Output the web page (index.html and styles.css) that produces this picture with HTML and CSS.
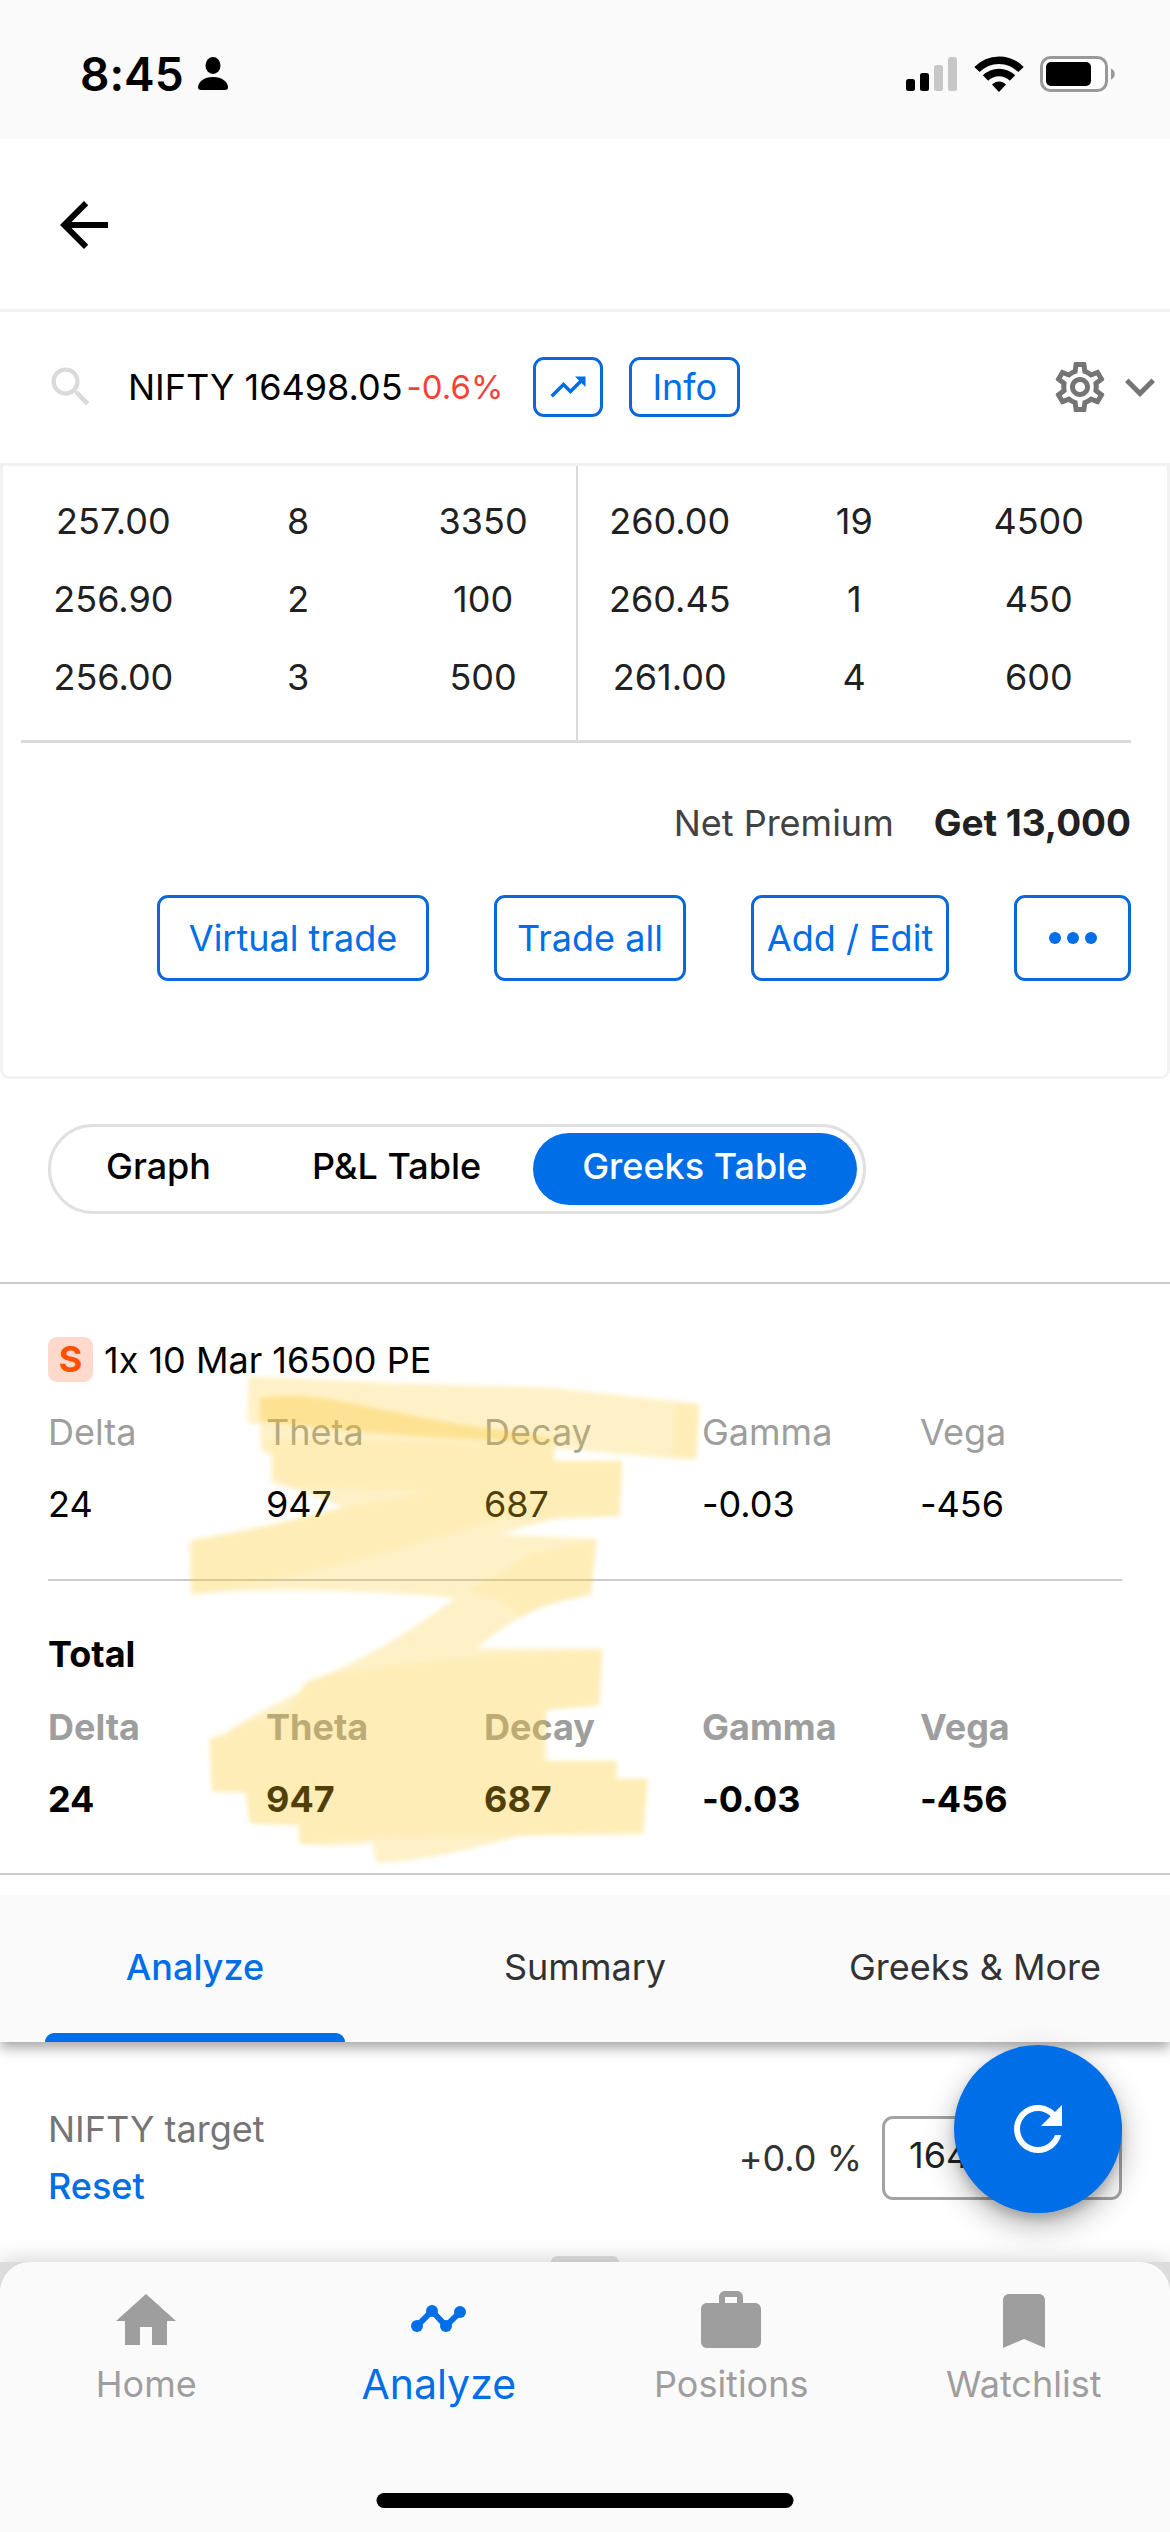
FILE: index.html
```html
<!DOCTYPE html>
<html lang="en">
<head>
    <meta charset="UTF-8">
    <meta name="viewport" content="width=device-width, initial-scale=1.0">
    <title>Analyze - NIFTY</title>
    <link rel="stylesheet" href="styles.css">
</head>

<body>
    <div class="status-bar">
        <div class="status-left">
            <span class="time">8:45</span>
            <svg width="30" height="34" viewBox="0 0 30 34"><ellipse cx="15" cy="8.500" rx="7.500" ry="8.500"/><path d="M3 33C1 33 0 32 0 30.500C0 25 6 20 15 20s15 5 15 10.500c0 1.500-1 2.500-3 2.500z"/></svg>
        </div>
        <div class="status-right">
            <svg width="52" height="36" viewBox="0 0 52 36">
                <rect x="0" y="23" width="9" height="12" rx="2.500"/>
                <rect x="14" y="17" width="9" height="18" rx="2.500"/>
                <g fill="#c7c7c7"><rect x="28" y="9" width="9" height="26" rx="2.500"/><rect x="42" y="1" width="9" height="34" rx="2.500"/></g>
            </svg>
            <svg width="50" height="36" viewBox="0 0 50 36">
                <g fill="none" stroke="#000" stroke-width="7.500"><path d="M3 13.500C15 1 35 1 47 13.500"/><path d="M11.500 22C19 14.500 31 14.500 38.500 22"/></g>
                <path d="M18 28.500c4-4 10-4 14 0L25 36z"/>
            </svg>
            <svg width="76" height="36" viewBox="0 0 76 36">
                <rect x="1.500" y="1.500" width="65" height="33" rx="9" fill="#fff" stroke="#999" stroke-width="3"/>
                <rect x="6" y="6" width="45" height="24" rx="5"/>
                <path d="M71 12.500c5 2 5 9 0 11z" fill="#999"/>
            </svg>
        </div>
    </div>

    <header class="app-header">
        <button class="icon-btn" aria-label="Back">
            <svg width="72" height="72" viewBox="0 0 24 24"><path d="M20 11H7.830l5.590-5.590L12 4l-8 8 8 8 1.410-1.410L7.830 13H20v-2z"/></svg>
        </button>
    </header>

    <div class="search-row">
        <svg class="search-icon" width="52" height="52" viewBox="0 0 24 24"><path d="M15.500 14h-.79l-.28-.27C15.410 12.590 16 11.110 16 9.500 16 5.910 13.090 3 9.500 3S3 5.910 3 9.500 5.910 16 9.500 16c1.610 0 3.090-.59 4.230-1.570l.27.28v.79l5 4.990L20.490 19l-4.990-5zm-6 0C7.010 14 5 11.990 5 9.500S7.010 5 9.500 5 14 7.010 14 9.500 11.990 14 9.500 14z"/></svg>
        <span class="symbol">NIFTY 16498.05</span><span class="change">-0.6%</span>
        <button class="outline-btn chart-btn" aria-label="Chart">
            <svg width="42" height="42" viewBox="0 0 24 24"><path d="M16 6l2.290 2.290-4.880 4.880-4-4L2 16.590 3.410 18l6-6 4 4 6.300-6.290L22 12V6z"/></svg>
        </button>
        <button class="outline-btn info-btn">Info</button>
        <div class="row-actions">
            <button class="icon-btn" aria-label="Settings">
                <svg width="60" height="60" viewBox="0 0 24 24"><path d="M19.430 12.980c.04-.32.07-.64.07-.98 0-.34-.03-.66-.07-.98l2.110-1.650c.19-.15.24-.42.12-.64l-2-3.460c-.09-.16-.26-.25-.44-.25-.06 0-.12.010-.17.030l-2.490 1c-.52-.4-1.080-.73-1.690-.98l-.38-2.650C14.460 2.180 14.250 2 14 2h-4c-.25 0-.46.18-.49.42l-.38 2.650c-.61.25-1.170.59-1.690.98l-2.490-1c-.06-.02-.12-.03-.18-.03-.17 0-.34.09-.43.25l-2 3.460c-.13.22-.07.49.12.64l2.110 1.650c-.04.32-.07.65-.07.98 0 .33.03.66.07.98l-2.110 1.650c-.19.15-.24.42-.12.64l2 3.460c.09.16.26.25.44.25.06 0 .12-.01.17-.03l2.490-1c.52.4 1.080.73 1.690.98l.38 2.650c.03.24.24.42.49.42h4c.25 0 .46-.18.49-.42l.38-2.650c.61-.25 1.170-.59 1.690-.98l2.490 1c.06.02.12.03.18.03.17 0 .34-.09.43-.25l2-3.460c.12-.22.07-.49-.12-.64l-2.110-1.650zm-1.980-1.710c.04.31.05.52.05.73 0 .21-.02.43-.05.73l-.14 1.130.89.7 1.080.84-.7 1.210-1.270-.51-1.040-.42-.9.68c-.43.32-.84.56-1.250.73l-1.060.43-.16 1.130-.2 1.350h-1.400l-.19-1.350-.16-1.130-1.060-.43c-.43-.18-.83-.41-1.230-.71l-.91-.7-1.060.43-1.270.51-.7-1.210 1.080-.84.89-.7-.14-1.130c-.03-.31-.05-.54-.05-.74s.02-.43.05-.73l.14-1.130-.89-.7-1.080-.84.7-1.210 1.270.51 1.040.42.9-.68c.43-.32.84-.56 1.250-.73l1.060-.43.16-1.130.2-1.350h1.390l.19 1.350.16 1.130 1.060.43c.43.18.83.41 1.230.71l.91.7 1.060-.43 1.270-.51.7 1.210-1.070.85-.89.7.14 1.130zM12 8c-2.210 0-4 1.790-4 4s1.790 4 4 4 4-1.790 4-4-1.790-4-4-4zm0 6c-1.100 0-2-.9-2-2s.9-2 2-2 2 .9 2 2-.9 2-2 2z"/></svg>
            </button>
            <button class="icon-btn" aria-label="Expand">
                <svg width="60" height="60" viewBox="0 0 24 24"><path d="M16.590 8.590L12 13.170 7.410 8.590 6 10l6 6 6-6z"/></svg>
            </button>
        </div>
    </div>

    <main class="content">
        <section class="card">
            <div class="book">
                <table class="book-side">
                    <tr><td>257.00</td><td>8</td><td>3350</td></tr>
                    <tr><td>256.90</td><td>2</td><td>100</td></tr>
                    <tr><td>256.00</td><td>3</td><td>500</td></tr>
                </table>
                <table class="book-side asks">
                    <tr><td>260.00</td><td>19</td><td>4500</td></tr>
                    <tr><td>260.45</td><td>1</td><td>450</td></tr>
                    <tr><td>261.00</td><td>4</td><td>600</td></tr>
                </table>
            </div>
            <div class="premium">
                <span>Net Premium</span>
                <strong>Get 13,000</strong>
            </div>
            <div class="actions">
                <button class="outline-btn action-wide">Virtual trade</button>
                <button class="outline-btn action">Trade all</button>
                <button class="outline-btn action-tight">Add / Edit</button>
                <button class="outline-btn action-more" aria-label="More">
                    <svg width="50" height="14" viewBox="0 0 50 14"><circle cx="7" cy="7" r="6"/><circle cx="25" cy="7" r="6"/><circle cx="43" cy="7" r="6"/></svg>
                </button>
            </div>
        </section>

        <div class="view-switch">
            <button>Graph</button>
            <button>P&amp;L Table</button>
            <button class="active">Greeks Table</button>
        </div>

        <section class="greeks">
            <div class="leg">
                <span class="side">S</span>
                <span>1x 10 Mar 16500 PE</span>
            </div>
            <table class="greeks-table">
                <tr><th>Delta</th><th>Theta</th><th>Decay</th><th>Gamma</th><th>Vega</th></tr>
                <tr><td>24</td><td>947</td><td>687</td><td>-0.03</td><td>-456</td></tr>
            </table>
            <hr>
            <h3>Total</h3>
            <table class="greeks-table total">
                <tr><th>Delta</th><th>Theta</th><th>Decay</th><th>Gamma</th><th>Vega</th></tr>
                <tr><td>24</td><td>947</td><td>687</td><td>-0.03</td><td>-456</td></tr>
            </table>

            <!-- highlighter marks over theta and decay -->
            <svg class="marker" width="720" height="500" viewBox="0 1375 720 500">
                <defs><filter id="soft"><feGaussianBlur stdDeviation="2"/></filter></defs>
                <g fill="#fcc523" stroke="#fcc523" stroke-width="5" stroke-linejoin="round" filter="url(#soft)">
                    <g opacity=".25">
                        <path d="M251 1380L400 1387L548 1391L640 1401L697 1407L694 1458L672 1457L547 1446L250 1422z"/>
                        <path d="M262 1400L400 1405L552 1440V1464H620L617 1515Q570 1516 552 1518L484 1537Q540 1540 594 1542L589 1593Q555 1600 540 1606Q500 1624 470 1652H600L597 1704L544 1709V1764H614V1782H645L641 1832L520 1834Q430 1860 378 1861L375 1841Q340 1846 302 1843V1824L252 1822L248 1791L214 1790L212 1742L228 1738Q232 1728 300 1696L310 1684Q380 1660 462 1597Q330 1584 193 1592L192 1544Q260 1534 330 1514L350 1508L275 1480V1453L263 1450z"/>
                    </g>
                    <g opacity=".09" stroke="none">
                        <path d="M268 1440L553 1445L552 1462H622L619 1517L500 1520L400 1550L300 1575L193 1596L193 1540L340 1510L430 1492L272 1488z"/>
                        <path d="M596 1540L590 1597Q540 1606 520 1618L500 1600L466 1592L530 1556z"/>
                        <path d="M303 1684Q400 1656 602 1653L600 1707L546 1710L542 1762H618L616 1780H648L643 1836L375 1838L300 1845L296 1825L250 1825L245 1793L212 1793L210 1738L290 1710z"/>
                        <path d="M676 1404L699 1407L696 1460L672 1457z"/>
                    </g>
                    <g opacity=".32" stroke="none">
                        <path d="M260 1399Q300 1393 350 1404L440 1422L555 1440L552 1443Q400 1440 260 1422z"/>
                    </g>
                </g>
            </svg>
        </section>

        <div class="tabs">
            <button class="tab active">Analyze</button>
            <button class="tab">Summary</button>
            <button class="tab">Greeks &amp; More</button>
        </div>

        <section class="target">
            <div class="target-label">
                <label for="target">NIFTY target</label>
                <a href="#">Reset</a>
            </div>
            <span class="percent">+0.0 %</span>
            <input id="target" class="target-input" type="text" value="16498">
            <button class="fab" aria-label="Refresh">
                <svg width="72" height="72" viewBox="0 0 24 24"><path d="M17.650 6.350C16.200 4.900 14.210 4 12 4c-4.420 0-7.990 3.580-7.990 8s3.570 8 7.990 8c3.730 0 6.840-2.550 7.730-6h-2.080c-.82 2.330-3.040 4-5.650 4-3.310 0-6-2.690-6-6s2.690-6 6-6c1.660 0 3.140.69 4.220 1.780L13 11h7V4l-2.350 2.350z"/></svg>
            </button>
        </section>
        <div class="handle"></div>
    </main>

    <div class="nav-wrap">
        <nav class="bottom-nav">
            <a href="#">
                <svg width="72" height="72" viewBox="0 0 24 24"><path d="M10 20v-6h4v6h5v-8h3L12 3 2 12h3v8z"/></svg>
                <span>Home</span>
            </a>
            <a href="#" class="active">
                <svg width="72" height="72" viewBox="0 0 72 72"><path d="M14 41L29 26L43 41L57 27" fill="none" stroke="#006ee6" stroke-width="6"/><circle cx="14" cy="41" r="6"/><circle cx="29" cy="26" r="6"/><circle cx="43" cy="41" r="6"/><circle cx="57" cy="27" r="6"/></svg>
                <span>Analyze</span>
            </a>
            <a href="#">
                <svg width="72" height="72" viewBox="0 0 24 24"><path fill-rule="evenodd" d="M20 6h-4V4c0-1.110-.89-2-2-2h-4c-1.110 0-2 .89-2 2v2H4c-1.110 0-2 .89-2 2v11c0 1.110.89 2 2 2h16c1.110 0 2-.89 2-2V8c0-1.110-.89-2-2-2zm-6 0h-4V4h4v2z"/></svg>
                <span>Positions</span>
            </a>
            <a href="#">
                <svg width="72" height="72" viewBox="0 0 24 24"><path d="M17 3H7c-1.100 0-2 .9-2 2v16l7-3 7 3V5c0-1.100-.9-2-2-2z"/></svg>
                <span>Watchlist</span>
            </a>
        </nav>
        <div class="home-bar"></div>
    </div>
</body>
</html>
```

FILE: styles.css
```css
* {
    box-sizing: border-box;
}

body {
    margin: 0;
    height: 100vh;
    display: flex;
    flex-direction: column;
    overflow: hidden;
    background-color: #fff;
    color: #212121;
    font-family: Inter, "Liberation Sans", sans-serif;
    font-size: 36px;
    font-variant-ligatures: no-contextual;
    line-height: 48px;
}

button {
    font: inherit;
    color: inherit;
    background: none;
    border: none;
    padding: 0;
    cursor: pointer;
}

a {
    text-decoration: none;
}

svg {
    display: block;
    flex: none;
}

table {
    border-collapse: collapse;
    table-layout: fixed;
    width: 100%;
}

th, td {
    padding: 0;
}

/* status bar */
.status-bar {
    display: flex;
    justify-content: space-between;
    height: 139px;
    padding: 50px 54px 0 80px;
    background-color: #fafafa;
}

.status-left, .status-right {
    display: flex;
    align-items: center;
    height: 48px;
}

.status-left {
    gap: 14px;
}

.status-right {
    gap: 16px;
}

.time {
    color: #000;
    font-size: 46px;
    font-weight: 600;
}

.app-header {
    display: flex;
    padding: 50px 48px 48px;
    border-bottom: 3px solid #f0f0f0;
}

.search-row {
    display: flex;
    align-items: center;
    padding: 45px 0 46px 45px;
    color: #000;
}

.search-icon {
    fill: #dadada;
    margin-right: 31px;
}

.change {
    color: #f44336;
    font-size: 33px;
    margin: 0 30px 0 4px;
}

.outline-btn {
    display: flex;
    align-items: center;
    justify-content: center;
    border: 3px solid #0b68d8;
    border-radius: 11px;
    color: #006ee6;
    fill: #006ee6;
}

.chart-btn {
    width: 70px;
    height: 60px;
    margin-right: 26px;
}

.info-btn {
    width: 111px;
    height: 60px;
}

.row-actions {
    display: flex;
    margin-left: auto;
    fill: #757575;
}

.content {
    position: relative;
    flex: 1;
    min-height: 0;
    display: flex;
    flex-direction: column;
}

.card {
    padding: 0 36px 95px 18px;
    border: 3px solid #f2f2f2;
    border-radius: 0 0 9px 9px;
}

.book {
    display: flex;
    border-bottom: 3px solid #dadada;
}

.book-side {
    border-collapse: separate;
    border-spacing: 0;
    padding: 16px 0 24px;
    text-align: center;
}

.book-side td {
    height: 78px;
}

.asks {
    border-left: 2px solid #dadada;
}

.premium {
    display: flex;
    justify-content: flex-end;
    gap: 40px;
    margin-top: 56px;
    color: #424242;
}

.premium strong {
    color: #212121;
    font-size: 37px;
    font-weight: 700;
}

.actions {
    display: flex;
    justify-content: flex-end;
    gap: 65px;
    margin-top: 48px;
}

.actions .outline-btn {
    height: 86px;
}

.action-wide {
    width: 272px;
}

.action {
    width: 192px;
}

.action-tight {
    width: 198px;
}

.action-more {
    width: 117px;
}

/* graph / table switch */
.view-switch {
    display: flex;
    align-self: flex-start;
    gap: 3px;
    margin: 45px 48px 68px;
    padding: 6px;
    border: 3px solid #e0e0e0;
    border-radius: 45px;
    color: #000;
    font-weight: 500;
}

.view-switch button {
    height: 72px;
    padding: 0 49px 6px;
    border-radius: 36px;
}

.view-switch .active {
    background-color: #006ee6;
    color: #fff;
}

.greeks {
    position: relative;
    padding: 53px 48px 38px;
    border-top: 2px solid #ccc;
    border-bottom: 2px solid #ccc;
    color: #000;
}

.leg {
    display: flex;
    align-items: center;
    gap: 11px;
    height: 45px;
    margin-bottom: 14px;
}

.side {
    width: 45px;
    height: 45px;
    border-radius: 9px;
    background-color: #ffdacc;
    color: #ff5000;
    font-weight: 700;
    line-height: 45px;
    text-align: center;
}

.greeks-table {
    text-align: left;
}

.greeks-table th {
    width: 218px;
    color: #9e9e9e;
    font-weight: 400;
}

.greeks-table th:last-child {
    width: auto;
}

.greeks-table tr {
    height: 72px;
}

.greeks hr {
    margin: 39px 0 49px;
    border: none;
    border-top: 2px solid #ccc;
}

.greeks h3 {
    margin: 0 0 13px;
    font-size: 36px;
    font-weight: 700;
}

.total th, .total td {
    font-weight: 700;
}

.marker {
    position: absolute;
    left: 0;
    top: 90px;
    pointer-events: none;
}

.tabs {
    display: flex;
    margin-top: 20px;
    background-color: #fafafa;
    box-shadow: 0 6px 12px rgba(0, 0, 0, 0.35);
    clip-path: inset(0 0 -30px 0);
}

.tab {
    flex: 1;
    height: 147px;
    padding-bottom: 3px;
    color: #333;
}

.tab.active {
    position: relative;
    color: #006ee6;
    font-weight: 500;
}

.tab.active::after {
    content: "";
    position: absolute;
    left: 45px;
    right: 45px;
    bottom: 0;
    height: 9px;
    border-radius: 9px 9px 0 0;
    background-color: #006ee6;
}

.target {
    position: relative;
    display: flex;
    align-items: center;
    padding: 59px 48px 0;
}

.target-label {
    display: flex;
    flex-direction: column;
    flex: 1;
    line-height: 57px;
    color: #757575;
}

.target-label a {
    color: #006ee6;
    font-weight: 500;
}

.percent {
    color: #333;
    margin-right: 20px;
}

.target-input {
    width: 240px;
    height: 84px;
    padding: 0 24px 6px;
    border: 3px solid #a3a3a3;
    border-radius: 11px;
    color: #212121;
    background-color: #fff;
    font: inherit;
}

/* floats over the target field */
.fab {
    position: absolute;
    right: 48px;
    top: 3px;
    width: 168px;
    height: 168px;
    border-radius: 50%;
    background-color: #006ee6;
    fill: #fff;
    box-shadow: 0 12px 30px rgba(0, 0, 0, 0.3), 0 6px 10px rgba(0, 0, 0, 0.15);
}

.fab svg {
    margin: 0 auto;
}

.handle {
    position: absolute;
    left: 50%;
    bottom: 0;
    width: 68px;
    height: 6px;
    margin-left: -34px;
    border-radius: 6px 6px 0 0;
    background-color: #e0e0e0;
}

.nav-wrap {
    position: relative;
    height: 270px;
    background-color: #dcdcdc;
    box-shadow: 0 0 24px rgba(0, 0, 0, 0.2);
}

.bottom-nav {
    display: flex;
    height: 100%;
    padding-top: 23px;
    border-radius: 30px 30px 0 0;
    background-color: #fafafa;
}

.bottom-nav a {
    flex: 1;
    display: flex;
    flex-direction: column;
    align-items: center;
    gap: 3px;
    color: #9e9e9e;
    fill: #9e9e9e;
}

.bottom-nav .active {
    color: #006ee6;
    fill: #006ee6;
    font-size: 41px;
}

.home-bar {
    position: absolute;
    left: 50%;
    bottom: 24px;
    width: 417px;
    height: 15px;
    border-radius: 8px;
    background-color: #000;
    transform: translateX(-50%);
}
```
